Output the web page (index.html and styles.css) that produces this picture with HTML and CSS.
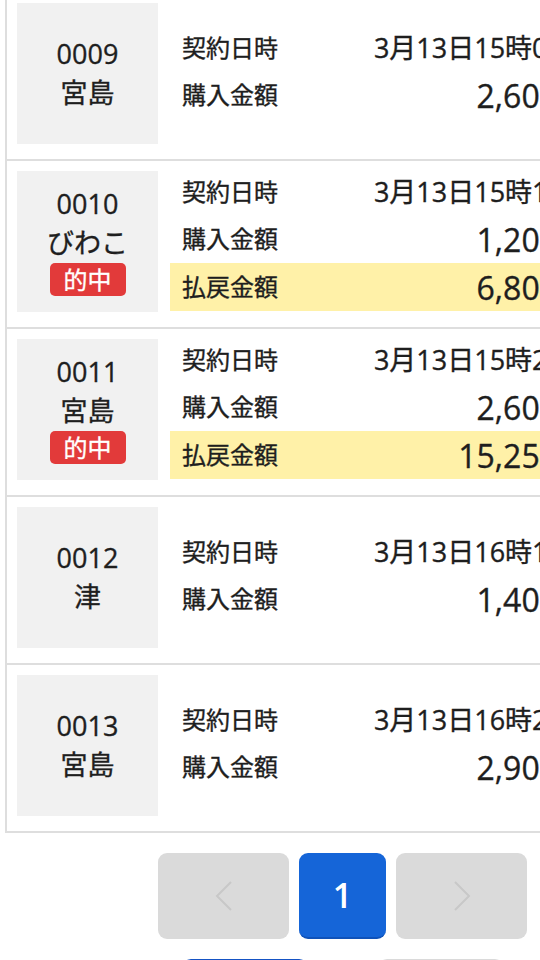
FILE: index.html
```html
<!DOCTYPE html>
<html lang="ja">
<head>
    <meta charset="UTF-8">
    <meta name="viewport" content="width=device-width, initial-scale=1.0">
    <title>購入履歴</title>
    <link rel="stylesheet" href="styles.css">
</head>
<body>
    <div class="page">
        <div class="history">
            <div class="ticket">
                <div class="race">
                    <span>0009</span>
                    <span>宮島</span>
                </div>
                <table class="detail">
                    <tr><td class="label">契約日時</td><td class="date">3月13日15時05分</td></tr>
                    <tr><td class="label">購入金額</td><td class="amount">2,600円</td></tr>
                </table>
            </div>
            <div class="ticket">
                <div class="race">
                    <span>0010</span>
                    <span>びわこ</span>
                    <span class="hit">的中</span>
                </div>
                <table class="detail">
                    <tr><td class="label">契約日時</td><td class="date">3月13日15時16分</td></tr>
                    <tr><td class="label">購入金額</td><td class="amount">1,200円</td></tr>
                    <tr class="payout"><td class="label">払戻金額</td><td class="amount">6,800円</td></tr>
                </table>
            </div>
            <div class="ticket">
                <div class="race">
                    <span>0011</span>
                    <span>宮島</span>
                    <span class="hit">的中</span>
                </div>
                <table class="detail">
                    <tr><td class="label">契約日時</td><td class="date">3月13日15時28分</td></tr>
                    <tr><td class="label">購入金額</td><td class="amount">2,600円</td></tr>
                    <tr class="payout"><td class="label">払戻金額</td><td class="amount">15,250円</td></tr>
                </table>
            </div>
            <div class="ticket">
                <div class="race">
                    <span>0012</span>
                    <span>津</span>
                </div>
                <table class="detail">
                    <tr><td class="label">契約日時</td><td class="date">3月13日16時12分</td></tr>
                    <tr><td class="label">購入金額</td><td class="amount">1,400円</td></tr>
                </table>
            </div>
            <div class="ticket">
                <div class="race">
                    <span>0013</span>
                    <span>宮島</span>
                </div>
                <table class="detail">
                    <tr><td class="label">契約日時</td><td class="date">3月13日16時24分</td></tr>
                    <tr><td class="label">購入金額</td><td class="amount">2,900円</td></tr>
                </table>
            </div>
        </div>

        <div class="pager">
            <button class="pager-btn arrow" disabled>
                <svg width="18" height="30" viewBox="0 0 18 30"><path d="M16 1 L2 15 L16 29" fill="none" stroke="#c8c8c8" stroke-width="2"/></svg>
            </button>
            <button class="pager-btn current">1</button>
            <button class="pager-btn arrow" disabled>
                <svg width="18" height="30" viewBox="0 0 18 30"><path d="M2 1 L16 15 L2 29" fill="none" stroke="#c8c8c8" stroke-width="2"/></svg>
            </button>
        </div>

        <div class="actions">
            <button class="action primary"></button>
            <button class="action"></button>
        </div>
    </div>
</body>
</html>
```
FILE: styles.css
```css
* {
    box-sizing: border-box;
}

body {
    margin: 0;
    font-family: "Open Sans", "Noto Sans CJK JP", sans-serif;
    color: #1e1e1e;
    background-color: #fff;
    overflow: hidden;
    -webkit-text-stroke: 0.35px currentColor;
}

.page {
    width: 685px;
}

.history {
    width: 609px;
    margin: -7px 0 0 5px;
    border: 2px solid #dedede;
    border-top: none;
}

.ticket {
    display: flex;
    align-items: center;
    gap: 12px;
    padding: 10px 10px 15px;
    border-bottom: 2px solid #dedede;
}

.ticket:last-child {
    border-bottom: none;
}

.race {
    flex: none;
    width: 141px;
    height: 141px;
    padding-bottom: 1px;
    background-color: #f1f1f1;
    display: flex;
    flex-direction: column;
    align-items: center;
    justify-content: center;
    font-size: 27px;
    line-height: 39px;
}

.hit {
    margin: 1px 0 2px;
    padding: 0 14px;
    height: 33px;
    line-height: 33px;
    font-size: 24px;
    color: #fff;
    background-color: #e23a3a;
    border-radius: 5px;
}

.detail {
    flex: 1;
    border-collapse: collapse;
    margin-top: -4px;
}

.detail td {
    height: 46px;
    padding: 0 12px 2px;
    white-space: nowrap;
}

.label {
    font-size: 24px;
}

.date {
    text-align: right;
    font-size: 27px;
}

.amount {
    text-align: right;
    font-size: 32px;
}

.payout {
    background-color: #fff1a8;
}

.pager {
    display: flex;
    justify-content: center;
    gap: 10px;
    margin-top: 20px;
}

.pager-btn {
    height: 86px;
    border: none;
    border-radius: 9px;
    font-family: inherit;
    padding: 0;
    display: flex;
    align-items: center;
    justify-content: center;
}

.arrow {
    width: 131px;
    background-color: #dadada;
}

.current {
    width: 87px;
    background-color: #1565d8;
    border-bottom: 2px solid #0f52b9;
    color: #fff;
    font-size: 34px;
    font-weight: 600;
    -webkit-text-stroke: 0;
}

.actions {
    display: flex;
    justify-content: center;
    gap: 70px;
    margin-top: 20px;
}

.action {
    width: 126px;
    height: 86px;
    border: none;
    border-radius: 9px;
    background-color: #dadada;
}

.action.primary {
    background-color: #fff;
    border: 2px solid #1553c4;
}
```
